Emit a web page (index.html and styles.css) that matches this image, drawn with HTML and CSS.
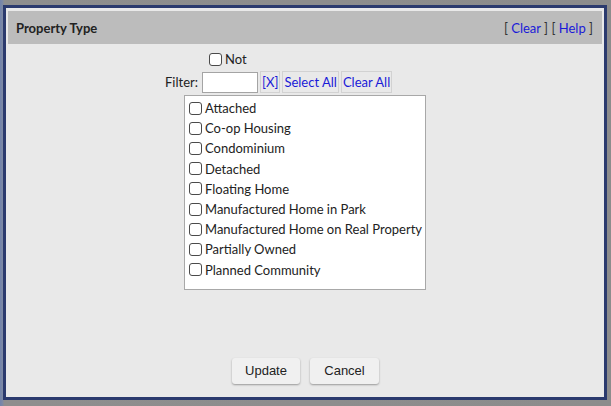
FILE: index.html
```html
<!DOCTYPE html>
<html>
<head>
<meta charset="utf-8">
<link rel="stylesheet" href="styles.css">
</head>
<body>
<div class="frame">
  <div class="dialog">
    <div class="header">
      <span class="title">Property Type</span>
      <span class="links">[ <a class="lnk">Clear</a> ] [ <a class="lnk">Help</a> ]</span>
    </div>
    <div class="content">
      <div class="not-row"><span class="cb"></span><span class="lbl">Not</span></div>
      <div class="filter-row">
        <span class="flabel">Filter:</span>
        <span class="finput"></span>
        <span class="fbtn">[X]</span>
        <span class="fbtn">Select All</span>
        <span class="fbtn">Clear All</span>
      </div>
      <div class="list">
        <div class="item"><span class="cb"></span><span class="lbl">Attached</span></div>
        <div class="item"><span class="cb"></span><span class="lbl">Co-op Housing</span></div>
        <div class="item"><span class="cb"></span><span class="lbl">Condominium</span></div>
        <div class="item"><span class="cb"></span><span class="lbl">Detached</span></div>
        <div class="item"><span class="cb"></span><span class="lbl">Floating Home</span></div>
        <div class="item"><span class="cb"></span><span class="lbl">Manufactured Home in Park</span></div>
        <div class="item"><span class="cb"></span><span class="lbl">Manufactured Home on Real Property</span></div>
        <div class="item"><span class="cb"></span><span class="lbl">Partially Owned</span></div>
        <div class="item"><span class="cb"></span><span class="lbl">Planned Community</span></div>
      </div>
      <div class="spacer"></div>
      <div class="buttons">
        <span class="btn">Update</span>
        <span class="btn">Cancel</span>
      </div>
    </div>
  </div>
</div>
</body>
</html>
```

FILE: styles.css
```css
html, body {
  margin: 0;
  padding: 0;
}
body {
  width: 611px;
  height: 406px;
  overflow: hidden;
  background: linear-gradient(to right, #7283ab 0, #7f8aa3 3px, #8e8e8e 4px, #8c8c8c 100%);
  font-family: Lato, "Noto Sans", sans-serif;
  font-size: 13px;
  color: #222;
}
.frame {
  padding: 5px 4px 6px 3px;
  height: 406px;
  box-sizing: border-box;
  display: flex;
}
.dialog {
  flex: 1;
  border: 3px solid #2b3a6e;
  background: #e9e9e9;
  padding: 3px 2px 0 2px;
  display: flex;
  flex-direction: column;
}
.header {
  height: 33px;
  background: #bcbcbc;
  display: flex;
  align-items: center;
  justify-content: space-between;
  padding: 0 9px 0 8px;
}
.title {
  font-weight: bold;
  color: #222;
}
.links {
  color: #333;
  font-size: 13px;
}
.lnk {
  color: #1a1ad8;
  text-decoration: none;
}
.content {
  flex: 1;
  display: flex;
  flex-direction: column;
}
.not-row {
  display: flex;
  align-items: center;
  padding-left: 201px;
  margin-top: 8px;
  height: 14px;
}
.cb {
  width: 11px;
  height: 11px;
  border: 1px solid #4a4a4a;
  border-radius: 3px;
  background: #fff;
  flex: none;
}
.lbl {
  margin-left: 3px;
  line-height: 14px;
}
.filter-row {
  display: flex;
  align-items: center;
  padding-left: 157px;
  margin-top: 5px;
  height: 22px;
}
.flabel {
  margin-right: 4px;
}
.finput {
  width: 54px;
  height: 19px;
  border: 1px solid #a4a4a4;
  background: #fff;
  margin-right: 2px;
}
.fbtn {
  height: 20px;
  line-height: 20px;
  border: 1px solid #d2d2d2;
  color: #1a1ad8;
  padding: 0 1px;
  margin-right: 2px;
}
.list {
  width: 240px;
  height: 191px;
  margin: 2px auto 0;
  border: 1px solid #a8a8a8;
  background: #fff;
  padding-top: 2px;
  box-sizing: content-box;
}
.item {
  display: flex;
  align-items: center;
  height: 20.2px;
  padding-left: 4px;
}
.spacer {
  flex: 1;
}
.buttons {
  display: flex;
  justify-content: center;
  gap: 10px;
  margin-bottom: 13px;
  padding-left: 1px;
}
.btn {
  height: 26px;
  line-height: 26px;
  padding: 0 11px;
  background: #f0f0f0;
  border-radius: 3px;
  box-shadow: 0 1px 2px rgba(0,0,0,0.35);
  font-family: "Liberation Sans", Arial, sans-serif;
  font-size: 13px;
  color: #222;
  text-align: center;
}
.btn:first-child {
  width: 46px;
}
.btn:last-child {
  width: 47px;
}
```
